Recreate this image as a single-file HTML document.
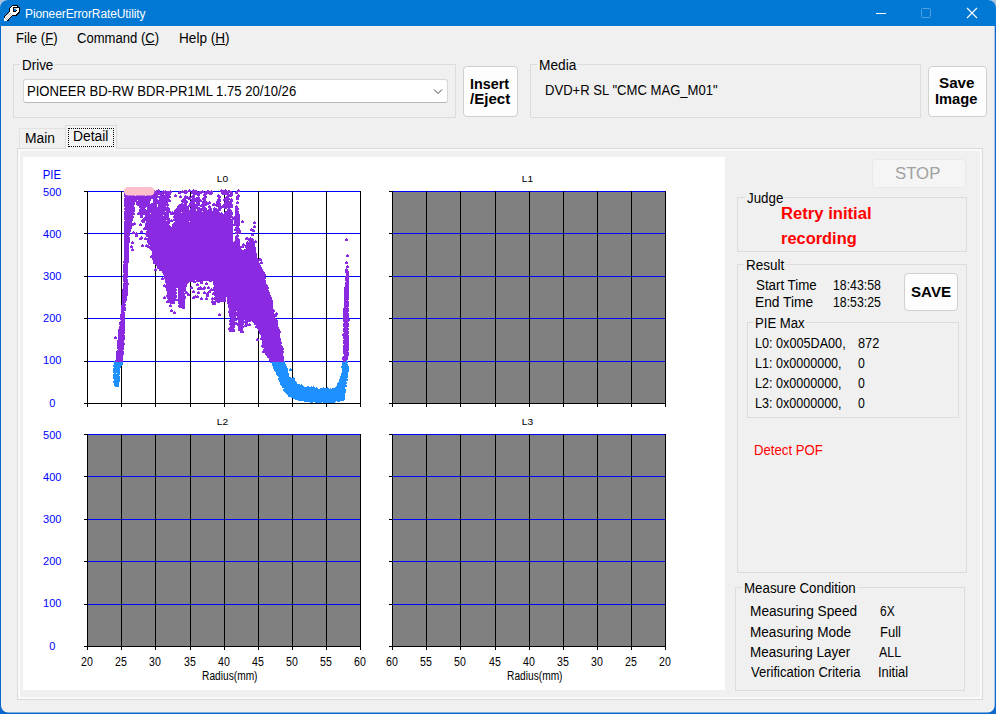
<!DOCTYPE html>
<html>
<head>
<meta charset="utf-8">
<title>PioneerErrorRateUtility</title>
<style>
html,body{margin:0;padding:0;}
body{width:996px;height:714px;overflow:hidden;background:#a9c3dd;font-family:"Liberation Sans",sans-serif;font-size:13px;color:#000;position:relative;}
#win{position:absolute;left:0;top:0;width:996px;height:714px;box-sizing:border-box;background:#f0f0f0;border-radius:8px 8px 0 0;overflow:hidden;}
#frame{position:absolute;left:0;top:0;z-index:50;pointer-events:none;}
#title{position:absolute;left:0;top:0;width:996px;height:26px;background:#0078d4;color:#fff;}
#title .t{position:absolute;left:25px;top:7px;font-size:12px;letter-spacing:-0.1px;}
.abs{position:absolute;}
.menu{position:absolute;top:30px;font-size:14px;line-height:16px;white-space:nowrap;transform:scaleX(.94);transform-origin:0 50%;}
.gb{position:absolute;border:1px solid #dcdcdc;box-sizing:border-box;}
.gb>.cap{position:absolute;top:-7px;background:#f0f0f0;padding:0 1px;line-height:15px;white-space:nowrap;font-size:14px;transform:scaleX(.94);transform-origin:0 50%;}
.btn{position:absolute;box-sizing:border-box;background:#fdfdfd;border:1px solid #d0d0d0;border-radius:4px;font-weight:bold;text-align:center;}
.l{position:absolute;white-space:nowrap;transform-origin:0 50%;}
u{text-decoration:underline;}
</style>
</head>
<body>
<div id="win">
  <div id="title">
    <svg class="abs" style="left:4px;top:5px" width="16" height="16" viewBox="0 0 16 16" shape-rendering="crispEdges"><path d="M8 0h6v1h-6zM7 1h1v1h-1zM13 1h1v1h-1zM6 2h1v1h-1zM9 2h7v1h-7zM5 3h1v1h-1zM9 3h1v1h-1zM15 3h1v1h-1zM5 4h1v1h-1zM9 4h1v1h-1zM15 4h1v1h-1zM5 5h1v1h-1zM9 5h1v1h-1zM12 5h1v1h-1zM15 5h1v1h-1zM5 6h1v1h-1zM9 6h3v1h-3zM15 6h1v1h-1zM4 7h1v1h-1zM14 7h2v1h-2zM3 8h1v1h-1zM13 8h2v1h-2zM2 9h1v1h-1zM12 9h2v1h-2zM1 10h1v1h-1zM8 10h5v1h-5zM0 11h1v1h-1zM7 11h1v1h-1zM0 12h1v1h-1zM6 12h1v1h-1zM5 13h1v1h-1zM4 14h1v1h-1zM3 15h2v1h-2z" fill="#000"/><path d="M8 1h5v1h-5zM7 2h2v1h-2zM6 3h3v1h-3zM13 3h2v1h-2zM6 4h3v1h-3zM12 4h3v1h-3zM6 5h3v1h-3zM13 5h2v1h-2zM6 6h3v1h-3zM12 6h3v1h-3zM5 7h9v1h-9zM5 8h1v1h-1zM7 8h6v1h-6zM4 9h1v1h-1zM6 9h1v1h-1zM8 9h4v1h-4zM3 10h1v1h-1zM5 10h1v1h-1zM7 10h1v1h-1zM2 11h1v1h-1zM4 11h1v1h-1zM6 11h1v1h-1zM1 12h1v1h-1zM3 12h1v1h-1zM5 12h1v1h-1zM0 13h1v1h-1zM2 13h1v1h-1zM4 13h1v1h-1zM0 14h2v1h-2zM3 14h1v1h-1zM0 15h3v1h-3z" fill="#fff"/><path d="M10 3h3v1h-3zM4 8h1v1h-1zM6 8h1v1h-1zM3 9h1v1h-1zM5 9h1v1h-1zM7 9h1v1h-1zM2 10h1v1h-1zM4 10h1v1h-1zM6 10h1v1h-1zM1 11h1v1h-1zM3 11h1v1h-1zM5 11h1v1h-1zM2 12h1v1h-1zM4 12h1v1h-1zM1 13h1v1h-1zM3 13h1v1h-1zM2 14h1v1h-1z" fill="#c8c8c8"/></svg>
    <div class="t">PioneerErrorRateUtility</div>
    <svg class="abs" style="left:860px;top:0" width="136" height="26" viewBox="0 0 136 26">
      <path d="M16 13.5 H26" stroke="#fff" stroke-width="1"/>
      <rect x="61.500" y="8.500" width="9" height="9" fill="none" stroke="#4f9fe0" stroke-width="1" rx="1"/>
      <path d="M107 8 L117 18 M117 8 L107 18" stroke="#fff" stroke-width="1.100"/>
    </svg>
  </div>



  <!-- Drive group -->
  <div class="gb" style="left:13px;top:64px;width:443px;height:54px;font-size:14px;"></div>
  <div class="abs" style="left:23px;top:79px;width:425px;height:24px;box-sizing:border-box;background:#fff;border:1px solid #d6d6d6;border-bottom-color:#b8b8b8;border-radius:3px;">
    
    <svg class="abs" style="left:409px;top:8px" width="10" height="7" viewBox="0 0 10 7"><path d="M1 1.500 L5 5.500 L9 1.500" fill="none" stroke="#444" stroke-width="1"/></svg>
  </div>
  <div class="btn" style="left:463px;top:66px;width:55px;height:51px;font-size:14px;line-height:16px;">
  </div>

  <!-- Media group -->
  <div class="gb" style="left:530px;top:64px;width:391px;height:54px;font-size:14px;">
    
  </div>
  <div class="btn" style="left:928px;top:66px;width:59px;height:51px;font-size:14px;line-height:16px;">
  </div>

  <!-- Tabs -->
  <div class="abs" style="left:17px;top:148px;width:966px;height:552px;box-sizing:border-box;border:1px solid #dadada;background:#f0f0f0;box-shadow:inset 0 0 0 2px #f9f9f9;"></div>
  
  <div class="abs" style="left:19px;top:128px;width:47px;height:20px;box-sizing:border-box;border:1px solid #e2e2e2;border-bottom:none;"></div>
  <div class="abs" style="left:65px;top:125px;width:52px;height:24px;box-sizing:border-box;border:1px solid #dadada;border-bottom:none;background:#f4f4f4;"></div>
  <div class="abs" style="left:68px;top:128px;width:46px;height:19px;box-sizing:border-box;border:1px dotted #000;"></div>
  

  <!-- Chart panel -->
  <div class="abs" id="chart" style="left:23px;top:157px;width:702px;height:533px;background:#fff;">
  <svg width="702" height="533" viewBox="23 157 702 533" style="position:absolute;left:0;top:0;font-family:'Liberation Sans',sans-serif;" shape-rendering="crispEdges">
    <rect x="87" y="191" width="273" height="1" fill="#0000ff"/>
<rect x="87" y="233" width="273" height="1" fill="#0000ff"/>
<rect x="87" y="276" width="273" height="1" fill="#0000ff"/>
<rect x="87" y="318" width="273" height="1" fill="#0000ff"/>
<rect x="87" y="361" width="273" height="1" fill="#0000ff"/>
<rect x="87" y="191" width="1" height="216" fill="#000"/>
<rect x="121" y="191" width="1" height="216" fill="#000"/>
<rect x="155" y="191" width="1" height="216" fill="#000"/>
<rect x="190" y="191" width="1" height="216" fill="#000"/>
<rect x="224" y="191" width="1" height="216" fill="#000"/>
<rect x="258" y="191" width="1" height="216" fill="#000"/>
<rect x="292" y="191" width="1" height="216" fill="#000"/>
<rect x="326" y="191" width="1" height="216" fill="#000"/>
<rect x="360" y="191" width="1" height="216" fill="#000"/>
<rect x="84" y="403" width="277" height="1" fill="#000"/>
<rect x="84" y="191" width="3" height="1" fill="#000"/>
<rect x="84" y="233" width="3" height="1" fill="#000"/>
<rect x="84" y="276" width="3" height="1" fill="#000"/>
<rect x="84" y="318" width="3" height="1" fill="#000"/>
<rect x="84" y="361" width="3" height="1" fill="#000"/>
<path d="M346 360h1v1h-1zM114 361h1v1h-1zM284 361h1v1h-1zM346 361h2v1h-2zM114 362h9v1h-9zM270 362h15v1h-15zM342 362h6v1h-6zM114 363h9v1h-9zM272 363h13v1h-13zM342 363h5v1h-5zM114 364h9v1h-9zM272 364h14v1h-14zM342 364h6v1h-6zM113 365h9v1h-9zM272 365h14v1h-14zM342 365h6v1h-6zM113 366h8v1h-8zM273 366h14v1h-14zM341 366h8v1h-8zM114 367h7v1h-7zM273 367h14v1h-14zM341 367h8v1h-8zM113 368h7v1h-7zM273 368h15v1h-15zM290 368h1v1h-1zM342 368h7v1h-7zM113 369h7v1h-7zM274 369h14v1h-14zM289 369h3v1h-3zM342 369h7v1h-7zM113 370h7v1h-7zM274 370h14v1h-14zM289 370h3v1h-3zM342 370h7v1h-7zM113 371h7v1h-7zM275 371h13v1h-13zM342 371h7v1h-7zM113 372h7v1h-7zM276 372h12v1h-12zM342 372h6v1h-6zM114 373h2v1h-2zM117 373h3v1h-3zM276 373h13v1h-13zM341 373h7v1h-7zM113 374h7v1h-7zM276 374h13v1h-13zM341 374h7v1h-7zM113 375h6v1h-6zM277 375h12v1h-12zM341 375h7v1h-7zM113 376h7v1h-7zM278 376h11v1h-11zM340 376h8v1h-8zM113 377h7v1h-7zM279 377h12v1h-12zM293 377h1v1h-1zM340 377h8v1h-8zM113 378h7v1h-7zM278 378h17v1h-17zM340 378h7v1h-7zM114 379h6v1h-6zM278 379h17v1h-17zM339 379h9v1h-9zM114 380h6v1h-6zM279 380h16v1h-16zM339 380h9v1h-9zM113 381h7v1h-7zM279 381h17v1h-17zM339 381h7v1h-7zM113 382h6v1h-6zM280 382h17v1h-17zM338 382h9v1h-9zM114 383h5v1h-5zM280 383h17v1h-17zM337 383h10v1h-10zM114 384h5v1h-5zM280 384h20v1h-20zM301 384h1v1h-1zM337 384h9v1h-9zM114 385h5v1h-5zM281 385h22v1h-22zM337 385h10v1h-10zM115 386h4v1h-4zM282 386h22v1h-22zM307 386h2v1h-2zM311 386h1v1h-1zM313 386h1v1h-1zM336 386h11v1h-11zM282 387h33v1h-33zM316 387h1v1h-1zM323 387h1v1h-1zM327 387h1v1h-1zM335 387h10v1h-10zM284 388h34v1h-34zM320 388h9v1h-9zM330 388h1v1h-1zM332 388h13v1h-13zM283 389h63v1h-63zM283 390h63v1h-63zM284 391h62v1h-62zM285 392h61v1h-61zM286 393h59v1h-59zM287 394h58v1h-58zM288 395h57v1h-57zM288 396h57v1h-57zM291 397h54v1h-54zM293 398h52v1h-52zM295 399h50v1h-50zM298 400h46v1h-46zM304 401h32v1h-32zM337 401h3v1h-3zM310 402h3v1h-3zM315 402h7v1h-7zM323 402h12v1h-12z" fill="#1e90ff"/>
<path d="M146 189h1v1h-1zM158 189h1v1h-1zM189 189h1v1h-1zM193 189h1v1h-1zM221 189h1v1h-1zM225 189h1v1h-1zM238 189h1v1h-1zM126 190h1v1h-1zM129 190h5v1h-5zM135 190h1v1h-1zM139 190h2v1h-2zM143 190h6v1h-6zM152 190h1v1h-1zM154 190h1v1h-1zM156 190h4v1h-4zM163 190h1v1h-1zM165 190h1v1h-1zM170 190h1v1h-1zM182 190h1v1h-1zM184 190h3v1h-3zM188 190h3v1h-3zM192 190h5v1h-5zM202 190h1v1h-1zM207 190h2v1h-2zM211 190h1v1h-1zM220 190h7v1h-7zM228 190h2v1h-2zM237 190h3v1h-3zM125 191h12v1h-12zM138 191h22v1h-22zM162 191h10v1h-10zM179 191h1v1h-1zM181 191h10v1h-10zM192 191h6v1h-6zM199 191h5v1h-5zM205 191h8v1h-8zM220 191h12v1h-12zM236 191h4v1h-4zM124 192h13v1h-13zM138 192h34v1h-34zM178 192h10v1h-10zM191 192h22v1h-22zM221 192h12v1h-12zM235 192h3v1h-3zM124 193h21v1h-21zM146 193h25v1h-25zM178 193h3v1h-3zM184 193h3v1h-3zM191 193h11v1h-11zM204 193h9v1h-9zM221 193h8v1h-8zM230 193h3v1h-3zM235 193h3v1h-3zM124 194h21v1h-21zM146 194h18v1h-18zM165 194h6v1h-6zM175 194h1v1h-1zM193 194h7v1h-7zM203 194h4v1h-4zM209 194h3v1h-3zM218 194h1v1h-1zM222 194h11v1h-11zM238 194h1v1h-1zM124 195h11v1h-11zM136 195h9v1h-9zM146 195h12v1h-12zM160 195h10v1h-10zM174 195h3v1h-3zM180 195h1v1h-1zM185 195h1v1h-1zM192 195h3v1h-3zM197 195h3v1h-3zM203 195h3v1h-3zM217 195h3v1h-3zM227 195h6v1h-6zM237 195h3v1h-3zM124 196h47v1h-47zM174 196h3v1h-3zM179 196h3v1h-3zM184 196h4v1h-4zM189 196h1v1h-1zM191 196h4v1h-4zM198 196h1v1h-1zM204 196h3v1h-3zM217 196h4v1h-4zM226 196h6v1h-6zM236 196h4v1h-4zM125 197h46v1h-46zM179 197h3v1h-3zM184 197h11v1h-11zM196 197h4v1h-4zM203 197h4v1h-4zM218 197h3v1h-3zM225 197h4v1h-4zM236 197h3v1h-3zM124 198h33v1h-33zM159 198h10v1h-10zM183 198h8v1h-8zM192 198h8v1h-8zM202 198h4v1h-4zM218 198h2v1h-2zM224 198h6v1h-6zM231 198h1v1h-1zM236 198h3v1h-3zM124 199h27v1h-27zM153 199h5v1h-5zM159 199h11v1h-11zM182 199h4v1h-4zM188 199h13v1h-13zM202 199h4v1h-4zM217 199h4v1h-4zM223 199h10v1h-10zM236 199h3v1h-3zM124 200h13v1h-13zM138 200h13v1h-13zM153 200h18v1h-18zM181 200h6v1h-6zM191 200h11v1h-11zM203 200h3v1h-3zM217 200h4v1h-4zM223 200h6v1h-6zM230 200h3v1h-3zM124 201h26v1h-26zM153 201h18v1h-18zM181 201h7v1h-7zM190 201h17v1h-17zM209 201h1v1h-1zM216 201h5v1h-5zM225 201h8v1h-8zM237 201h1v1h-1zM124 202h11v1h-11zM136 202h14v1h-14zM153 202h15v1h-15zM182 202h6v1h-6zM190 202h5v1h-5zM196 202h4v1h-4zM202 202h9v1h-9zM216 202h4v1h-4zM224 202h8v1h-8zM236 202h3v1h-3zM124 203h11v1h-11zM136 203h14v1h-14zM151 203h17v1h-17zM181 203h2v1h-2zM184 203h3v1h-3zM189 203h6v1h-6zM196 203h4v1h-4zM202 203h9v1h-9zM213 203h2v1h-2zM216 203h5v1h-5zM224 203h8v1h-8zM236 203h3v1h-3zM124 204h11v1h-11zM136 204h21v1h-21zM158 204h11v1h-11zM179 204h8v1h-8zM189 204h11v1h-11zM201 204h8v1h-8zM212 204h9v1h-9zM223 204h10v1h-10zM124 205h10v1h-10zM137 205h20v1h-20zM158 205h11v1h-11zM178 205h9v1h-9zM188 205h19v1h-19zM209 205h1v1h-1zM212 205h9v1h-9zM222 205h11v1h-11zM236 205h1v1h-1zM124 206h10v1h-10zM139 206h18v1h-18zM158 206h8v1h-8zM167 206h1v1h-1zM177 206h21v1h-21zM200 206h5v1h-5zM208 206h3v1h-3zM216 206h17v1h-17zM235 206h3v1h-3zM125 207h10v1h-10zM139 207h7v1h-7zM147 207h22v1h-22zM177 207h12v1h-12zM191 207h9v1h-9zM202 207h4v1h-4zM208 207h3v1h-3zM214 207h1v1h-1zM218 207h15v1h-15zM235 207h3v1h-3zM124 208h11v1h-11zM140 208h5v1h-5zM147 208h23v1h-23zM176 208h13v1h-13zM190 208h17v1h-17zM209 208h3v1h-3zM213 208h4v1h-4zM218 208h4v1h-4zM224 208h3v1h-3zM228 208h2v1h-2zM235 208h4v1h-4zM124 209h11v1h-11zM139 209h7v1h-7zM147 209h23v1h-23zM175 209h14v1h-14zM190 209h6v1h-6zM197 209h10v1h-10zM208 209h4v1h-4zM213 209h8v1h-8zM227 209h4v1h-4zM235 209h4v1h-4zM125 210h10v1h-10zM139 210h31v1h-31zM174 210h22v1h-22zM197 210h15v1h-15zM213 210h8v1h-8zM227 210h5v1h-5zM235 210h3v1h-3zM124 211h11v1h-11zM139 211h26v1h-26zM166 211h5v1h-5zM172 211h1v1h-1zM174 211h28v1h-28zM203 211h16v1h-16zM225 211h7v1h-7zM235 211h4v1h-4zM124 212h10v1h-10zM138 212h43v1h-43zM182 212h38v1h-38zM221 212h1v1h-1zM224 212h9v1h-9zM235 212h4v1h-4zM124 213h11v1h-11zM137 213h13v1h-13zM151 213h18v1h-18zM170 213h53v1h-53zM224 213h9v1h-9zM235 213h4v1h-4zM124 214h11v1h-11zM137 214h32v1h-32zM170 214h63v1h-63zM235 214h5v1h-5zM124 215h9v1h-9zM140 215h3v1h-3zM145 215h18v1h-18zM164 215h5v1h-5zM174 215h58v1h-58zM235 215h5v1h-5zM124 216h10v1h-10zM140 216h3v1h-3zM145 216h24v1h-24zM173 216h60v1h-60zM234 216h6v1h-6zM124 217h10v1h-10zM140 217h3v1h-3zM144 217h25v1h-25zM173 217h67v1h-67zM124 218h9v1h-9zM143 218h27v1h-27zM174 218h57v1h-57zM232 218h8v1h-8zM124 219h9v1h-9zM142 219h28v1h-28zM171 219h1v1h-1zM173 219h67v1h-67zM125 220h8v1h-8zM141 220h25v1h-25zM167 220h66v1h-66zM234 220h6v1h-6zM242 220h1v1h-1zM124 221h8v1h-8zM141 221h4v1h-4zM146 221h27v1h-27zM175 221h14v1h-14zM190 221h43v1h-43zM234 221h6v1h-6zM241 221h3v1h-3zM254 221h1v1h-1zM124 222h8v1h-8zM134 222h1v1h-1zM142 222h3v1h-3zM146 222h24v1h-24zM174 222h59v1h-59zM234 222h6v1h-6zM241 222h3v1h-3zM253 222h3v1h-3zM124 223h12v1h-12zM140 223h1v1h-1zM145 223h25v1h-25zM173 223h60v1h-60zM234 223h6v1h-6zM253 223h3v1h-3zM124 224h12v1h-12zM139 224h3v1h-3zM145 224h24v1h-24zM172 224h68v1h-68zM124 225h10v1h-10zM139 225h3v1h-3zM145 225h25v1h-25zM172 225h68v1h-68zM254 225h1v1h-1zM124 226h8v1h-8zM145 226h26v1h-26zM172 226h61v1h-61zM236 226h3v1h-3zM253 226h3v1h-3zM124 227h8v1h-8zM144 227h89v1h-89zM235 227h4v1h-4zM253 227h3v1h-3zM124 228h8v1h-8zM143 228h90v1h-90zM235 228h5v1h-5zM251 228h1v1h-1zM124 229h7v1h-7zM143 229h90v1h-90zM234 229h6v1h-6zM250 229h4v1h-4zM124 230h7v1h-7zM141 230h1v1h-1zM147 230h86v1h-86zM234 230h7v1h-7zM250 230h5v1h-5zM124 231h7v1h-7zM133 231h1v1h-1zM140 231h3v1h-3zM146 231h87v1h-87zM236 231h5v1h-5zM252 231h3v1h-3zM124 232h6v1h-6zM132 232h3v1h-3zM136 232h1v1h-1zM140 232h3v1h-3zM146 232h87v1h-87zM235 232h6v1h-6zM124 233h6v1h-6zM132 233h6v1h-6zM145 233h88v1h-88zM235 233h6v1h-6zM252 233h1v1h-1zM124 234h6v1h-6zM135 234h3v1h-3zM145 234h88v1h-88zM237 234h1v1h-1zM251 234h3v1h-3zM124 235h6v1h-6zM135 235h3v1h-3zM146 235h87v1h-87zM236 235h3v1h-3zM251 235h3v1h-3zM124 236h5v1h-5zM135 236h3v1h-3zM141 236h1v1h-1zM146 236h87v1h-87zM235 236h4v1h-4zM124 237h6v1h-6zM140 237h3v1h-3zM145 237h1v1h-1zM148 237h85v1h-85zM235 237h3v1h-3zM246 237h2v1h-2zM250 237h1v1h-1zM124 238h6v1h-6zM139 238h4v1h-4zM144 238h89v1h-89zM235 238h4v1h-4zM245 238h8v1h-8zM346 238h1v1h-1zM124 239h6v1h-6zM139 239h3v1h-3zM144 239h89v1h-89zM235 239h5v1h-5zM245 239h9v1h-9zM345 239h3v1h-3zM124 240h6v1h-6zM147 240h86v1h-86zM235 240h5v1h-5zM248 240h6v1h-6zM255 240h1v1h-1zM345 240h3v1h-3zM124 241h6v1h-6zM132 241h1v1h-1zM147 241h86v1h-86zM234 241h6v1h-6zM247 241h1v1h-1zM249 241h8v1h-8zM124 242h6v1h-6zM131 242h3v1h-3zM147 242h93v1h-93zM246 242h11v1h-11zM124 243h5v1h-5zM131 243h3v1h-3zM148 243h92v1h-92zM243 243h1v1h-1zM246 243h9v1h-9zM124 244h5v1h-5zM142 244h1v1h-1zM146 244h1v1h-1zM148 244h92v1h-92zM242 244h3v1h-3zM246 244h9v1h-9zM124 245h5v1h-5zM131 245h1v1h-1zM141 245h3v1h-3zM145 245h4v1h-4zM150 245h90v1h-90zM242 245h13v1h-13zM124 246h5v1h-5zM130 246h3v1h-3zM141 246h3v1h-3zM145 246h99v1h-99zM245 246h10v1h-10zM124 247h5v1h-5zM130 247h3v1h-3zM147 247h97v1h-97zM245 247h11v1h-11zM124 248h5v1h-5zM132 248h1v1h-1zM149 248h92v1h-92zM246 248h10v1h-10zM124 249h5v1h-5zM131 249h3v1h-3zM150 249h92v1h-92zM244 249h12v1h-12zM124 250h5v1h-5zM131 250h3v1h-3zM151 250h105v1h-105zM124 251h5v1h-5zM152 251h104v1h-104zM124 252h5v1h-5zM152 252h104v1h-104zM124 253h5v1h-5zM152 253h105v1h-105zM124 254h5v1h-5zM152 254h105v1h-105zM347 254h1v1h-1zM124 255h5v1h-5zM151 255h106v1h-106zM346 255h3v1h-3zM124 256h5v1h-5zM150 256h107v1h-107zM346 256h3v1h-3zM124 257h5v1h-5zM150 257h107v1h-107zM124 258h5v1h-5zM152 258h106v1h-106zM259 258h2v1h-2zM124 259h5v1h-5zM152 259h110v1h-110zM124 260h5v1h-5zM153 260h109v1h-109zM123 261h6v1h-6zM153 261h106v1h-106zM261 261h1v1h-1zM346 261h1v1h-1zM123 262h6v1h-6zM153 262h106v1h-106zM260 262h3v1h-3zM345 262h3v1h-3zM124 263h4v1h-4zM153 263h110v1h-110zM345 263h3v1h-3zM123 264h5v1h-5zM155 264h105v1h-105zM123 265h5v1h-5zM156 265h105v1h-105zM347 265h1v1h-1zM123 266h5v1h-5zM157 266h104v1h-104zM346 266h3v1h-3zM123 267h5v1h-5zM157 267h105v1h-105zM346 267h3v1h-3zM123 268h5v1h-5zM155 268h1v1h-1zM157 268h105v1h-105zM346 268h1v1h-1zM123 269h5v1h-5zM154 269h3v1h-3zM159 269h104v1h-104zM345 269h3v1h-3zM123 270h5v1h-5zM154 270h3v1h-3zM159 270h104v1h-104zM345 270h3v1h-3zM123 271h5v1h-5zM162 271h102v1h-102zM345 271h4v1h-4zM123 272h5v1h-5zM162 272h103v1h-103zM345 272h4v1h-4zM124 273h4v1h-4zM163 273h102v1h-102zM346 273h3v1h-3zM123 274h5v1h-5zM163 274h103v1h-103zM346 274h3v1h-3zM123 275h5v1h-5zM164 275h102v1h-102zM346 275h3v1h-3zM123 276h5v1h-5zM164 276h101v1h-101zM345 276h4v1h-4zM123 277h5v1h-5zM162 277h1v1h-1zM164 277h102v1h-102zM345 277h4v1h-4zM123 278h4v1h-4zM161 278h105v1h-105zM345 278h4v1h-4zM123 279h5v1h-5zM161 279h3v1h-3zM165 279h100v1h-100zM345 279h4v1h-4zM123 280h5v1h-5zM165 280h30v1h-30zM196 280h70v1h-70zM345 280h4v1h-4zM123 281h5v1h-5zM165 281h38v1h-38zM209 281h3v1h-3zM213 281h53v1h-53zM346 281h3v1h-3zM124 282h4v1h-4zM165 282h24v1h-24zM193 282h3v1h-3zM200 282h3v1h-3zM206 282h1v1h-1zM213 282h53v1h-53zM345 282h4v1h-4zM123 283h6v1h-6zM166 283h22v1h-22zM197 283h1v1h-1zM200 283h3v1h-3zM205 283h3v1h-3zM213 283h53v1h-53zM345 283h4v1h-4zM123 284h6v1h-6zM164 284h1v1h-1zM166 284h21v1h-21zM196 284h3v1h-3zM205 284h3v1h-3zM213 284h54v1h-54zM345 284h4v1h-4zM123 285h5v1h-5zM163 285h24v1h-24zM196 285h3v1h-3zM214 285h54v1h-54zM345 285h4v1h-4zM123 286h5v1h-5zM163 286h24v1h-24zM191 286h1v1h-1zM200 286h1v1h-1zM204 286h1v1h-1zM208 286h1v1h-1zM214 286h54v1h-54zM345 286h4v1h-4zM123 287h5v1h-5zM165 287h21v1h-21zM190 287h3v1h-3zM198 287h4v1h-4zM203 287h3v1h-3zM207 287h3v1h-3zM213 287h56v1h-56zM344 287h5v1h-5zM123 288h5v1h-5zM166 288h10v1h-10zM178 288h8v1h-8zM190 288h3v1h-3zM197 288h9v1h-9zM207 288h3v1h-3zM211 288h1v1h-1zM213 288h56v1h-56zM344 288h5v1h-5zM122 289h6v1h-6zM166 289h11v1h-11zM178 289h8v1h-8zM197 289h8v1h-8zM210 289h58v1h-58zM344 289h5v1h-5zM122 290h6v1h-6zM166 290h11v1h-11zM178 290h8v1h-8zM193 290h1v1h-1zM209 290h60v1h-60zM344 290h5v1h-5zM122 291h6v1h-6zM167 291h9v1h-9zM178 291h9v1h-9zM192 291h3v1h-3zM198 291h1v1h-1zM204 291h1v1h-1zM208 291h3v1h-3zM214 291h55v1h-55zM344 291h5v1h-5zM122 292h6v1h-6zM167 292h10v1h-10zM178 292h6v1h-6zM185 292h3v1h-3zM192 292h3v1h-3zM197 292h3v1h-3zM203 292h3v1h-3zM207 292h4v1h-4zM213 292h57v1h-57zM344 292h5v1h-5zM122 293h6v1h-6zM167 293h10v1h-10zM178 293h11v1h-11zM197 293h3v1h-3zM203 293h6v1h-6zM212 293h58v1h-58zM344 293h5v1h-5zM122 294h6v1h-6zM167 294h9v1h-9zM178 294h7v1h-7zM187 294h3v1h-3zM206 294h3v1h-3zM212 294h58v1h-58zM344 294h5v1h-5zM122 295h6v1h-6zM166 295h11v1h-11zM178 295h7v1h-7zM187 295h3v1h-3zM195 295h1v1h-1zM197 295h1v1h-1zM206 295h3v1h-3zM214 295h57v1h-57zM344 295h5v1h-5zM122 296h5v1h-5zM164 296h1v1h-1zM166 296h11v1h-11zM178 296h8v1h-8zM193 296h6v1h-6zM206 296h3v1h-3zM215 296h56v1h-56zM344 296h5v1h-5zM122 297h5v1h-5zM163 297h3v1h-3zM167 297h10v1h-10zM178 297h8v1h-8zM192 297h7v1h-7zM201 297h1v1h-1zM206 297h1v1h-1zM212 297h1v1h-1zM214 297h12v1h-12zM227 297h45v1h-45zM344 297h5v1h-5zM122 298h5v1h-5zM163 298h3v1h-3zM167 298h9v1h-9zM178 298h8v1h-8zM192 298h3v1h-3zM200 298h3v1h-3zM205 298h3v1h-3zM211 298h15v1h-15zM227 298h45v1h-45zM344 298h5v1h-5zM122 299h5v1h-5zM168 299h17v1h-17zM200 299h3v1h-3zM205 299h3v1h-3zM211 299h15v1h-15zM227 299h45v1h-45zM344 299h5v1h-5zM122 300h5v1h-5zM167 300h18v1h-18zM212 300h1v1h-1zM215 300h11v1h-11zM227 300h46v1h-46zM344 300h4v1h-4zM122 301h4v1h-4zM166 301h9v1h-9zM178 301h7v1h-7zM211 301h15v1h-15zM227 301h46v1h-46zM344 301h5v1h-5zM122 302h4v1h-4zM166 302h9v1h-9zM178 302h7v1h-7zM211 302h5v1h-5zM217 302h3v1h-3zM227 302h46v1h-46zM344 302h5v1h-5zM122 303h3v1h-3zM170 303h5v1h-5zM178 303h7v1h-7zM212 303h4v1h-4zM227 303h46v1h-46zM344 303h5v1h-5zM122 304h4v1h-4zM170 304h1v1h-1zM179 304h6v1h-6zM212 304h4v1h-4zM228 304h45v1h-45zM344 304h5v1h-5zM121 305h5v1h-5zM169 305h3v1h-3zM178 305h7v1h-7zM228 305h45v1h-45zM344 305h5v1h-5zM121 306h4v1h-4zM169 306h3v1h-3zM178 306h7v1h-7zM228 306h45v1h-45zM344 306h5v1h-5zM121 307h5v1h-5zM179 307h6v1h-6zM228 307h45v1h-45zM344 307h4v1h-4zM121 308h5v1h-5zM182 308h3v1h-3zM229 308h44v1h-44zM343 308h6v1h-6zM121 309h5v1h-5zM171 309h1v1h-1zM229 309h45v1h-45zM343 309h6v1h-6zM121 310h5v1h-5zM170 310h3v1h-3zM229 310h46v1h-46zM343 310h6v1h-6zM121 311h3v1h-3zM170 311h3v1h-3zM174 311h1v1h-1zM228 311h8v1h-8zM237 311h38v1h-38zM343 311h6v1h-6zM121 312h4v1h-4zM173 312h3v1h-3zM228 312h46v1h-46zM276 312h1v1h-1zM343 312h5v1h-5zM121 313h4v1h-4zM173 313h3v1h-3zM219 313h1v1h-1zM229 313h45v1h-45zM275 313h3v1h-3zM343 313h6v1h-6zM120 314h5v1h-5zM218 314h3v1h-3zM229 314h49v1h-49zM343 314h6v1h-6zM120 315h5v1h-5zM218 315h3v1h-3zM229 315h48v1h-48zM343 315h6v1h-6zM120 316h5v1h-5zM229 316h7v1h-7zM237 316h40v1h-40zM343 316h6v1h-6zM120 317h5v1h-5zM230 317h6v1h-6zM237 317h38v1h-38zM343 317h6v1h-6zM120 318h5v1h-5zM231 318h5v1h-5zM237 318h39v1h-39zM343 318h6v1h-6zM120 319h5v1h-5zM230 319h47v1h-47zM343 319h7v1h-7zM121 320h4v1h-4zM229 320h8v1h-8zM238 320h6v1h-6zM245 320h33v1h-33zM343 320h7v1h-7zM120 321h5v1h-5zM229 321h6v1h-6zM238 321h13v1h-13zM252 321h26v1h-26zM343 321h6v1h-6zM119 322h6v1h-6zM230 322h7v1h-7zM238 322h10v1h-10zM253 322h25v1h-25zM344 322h4v1h-4zM119 323h6v1h-6zM229 323h15v1h-15zM245 323h3v1h-3zM249 323h1v1h-1zM254 323h24v1h-24zM343 323h6v1h-6zM119 324h6v1h-6zM229 324h15v1h-15zM245 324h6v1h-6zM254 324h24v1h-24zM343 324h6v1h-6zM120 325h5v1h-5zM230 325h5v1h-5zM237 325h6v1h-6zM244 325h7v1h-7zM256 325h22v1h-22zM343 325h6v1h-6zM119 326h6v1h-6zM230 326h5v1h-5zM238 326h9v1h-9zM255 326h23v1h-23zM343 326h6v1h-6zM119 327h6v1h-6zM229 327h6v1h-6zM238 327h6v1h-6zM255 327h24v1h-24zM344 327h4v1h-4zM119 328h6v1h-6zM228 328h6v1h-6zM238 328h5v1h-5zM257 328h22v1h-22zM343 328h6v1h-6zM118 329h7v1h-7zM228 329h7v1h-7zM238 329h5v1h-5zM258 329h22v1h-22zM343 329h6v1h-6zM118 330h7v1h-7zM229 330h6v1h-6zM238 330h5v1h-5zM258 330h22v1h-22zM343 330h5v1h-5zM118 331h7v1h-7zM229 331h6v1h-6zM240 331h4v1h-4zM259 331h22v1h-22zM343 331h6v1h-6zM118 332h7v1h-7zM240 332h4v1h-4zM259 332h22v1h-22zM344 332h5v1h-5zM118 333h7v1h-7zM259 333h21v1h-21zM343 333h6v1h-6zM118 334h6v1h-6zM260 334h20v1h-20zM342 334h6v1h-6zM118 335h7v1h-7zM261 335h19v1h-19zM342 335h7v1h-7zM115 336h1v1h-1zM118 336h7v1h-7zM261 336h19v1h-19zM343 336h6v1h-6zM114 337h3v1h-3zM118 337h7v1h-7zM261 337h19v1h-19zM343 337h6v1h-6zM114 338h3v1h-3zM118 338h7v1h-7zM257 338h1v1h-1zM260 338h21v1h-21zM343 338h6v1h-6zM118 339h7v1h-7zM256 339h3v1h-3zM260 339h21v1h-21zM344 339h5v1h-5zM117 340h7v1h-7zM256 340h3v1h-3zM262 340h19v1h-19zM343 340h6v1h-6zM117 341h7v1h-7zM262 341h19v1h-19zM343 341h6v1h-6zM117 342h7v1h-7zM262 342h20v1h-20zM343 342h6v1h-6zM117 343h8v1h-8zM262 343h20v1h-20zM343 343h6v1h-6zM117 344h8v1h-8zM262 344h19v1h-19zM344 344h5v1h-5zM117 345h7v1h-7zM261 345h21v1h-21zM343 345h6v1h-6zM117 346h7v1h-7zM261 346h22v1h-22zM343 346h6v1h-6zM117 347h7v1h-7zM262 347h21v1h-21zM343 347h6v1h-6zM117 348h7v1h-7zM264 348h20v1h-20zM343 348h6v1h-6zM118 349h6v1h-6zM263 349h21v1h-21zM343 349h6v1h-6zM117 350h6v1h-6zM263 350h20v1h-20zM343 350h6v1h-6zM116 351h8v1h-8zM262 351h22v1h-22zM343 351h5v1h-5zM116 352h8v1h-8zM262 352h22v1h-22zM343 352h6v1h-6zM116 353h8v1h-8zM265 353h18v1h-18zM343 353h6v1h-6zM116 354h8v1h-8zM265 354h18v1h-18zM344 354h5v1h-5zM116 355h7v1h-7zM266 355h17v1h-17zM344 355h5v1h-5zM116 356h7v1h-7zM267 356h17v1h-17zM343 356h5v1h-5zM116 357h7v1h-7zM267 357h17v1h-17zM342 357h6v1h-6zM116 358h7v1h-7zM269 358h15v1h-15zM342 358h6v1h-6zM116 359h7v1h-7zM269 359h15v1h-15zM342 359h6v1h-6zM115 360h8v1h-8zM269 360h15v1h-15zM343 360h3v1h-3zM115 361h8v1h-8zM270 361h14v1h-14zM343 361h3v1h-3z" fill="#8a2be2"/>
<rect x="124" y="187" width="30.5" height="8.5" rx="4.200" ry="4.200" fill="#ffc0cb" shape-rendering="auto"/>
<text x="216.8" y="182" font-size="9.600" textLength="11.300" lengthAdjust="spacingAndGlyphs" fill="#000">L0</text>
<text x="52.2" y="196.3" font-size="11" text-anchor="middle" fill="#0000ff">500</text>
<text x="52.2" y="238.3" font-size="11" text-anchor="middle" fill="#0000ff">400</text>
<text x="52.2" y="280.4" font-size="11" text-anchor="middle" fill="#0000ff">300</text>
<text x="52.2" y="322.4" font-size="11" text-anchor="middle" fill="#0000ff">200</text>
<text x="52.2" y="364.4" font-size="11" text-anchor="middle" fill="#0000ff">100</text>
<text x="52.2" y="406.5" font-size="11" text-anchor="middle" fill="#0000ff">0</text>
<rect x="392" y="191" width="273" height="212" fill="#808080"/>
<rect x="392" y="191" width="273" height="1" fill="#0000ff"/>
<rect x="392" y="233" width="273" height="1" fill="#0000ff"/>
<rect x="392" y="276" width="273" height="1" fill="#0000ff"/>
<rect x="392" y="318" width="273" height="1" fill="#0000ff"/>
<rect x="392" y="361" width="273" height="1" fill="#0000ff"/>
<rect x="392" y="191" width="1" height="216" fill="#000"/>
<rect x="426" y="191" width="1" height="216" fill="#000"/>
<rect x="460" y="191" width="1" height="216" fill="#000"/>
<rect x="495" y="191" width="1" height="216" fill="#000"/>
<rect x="529" y="191" width="1" height="216" fill="#000"/>
<rect x="563" y="191" width="1" height="216" fill="#000"/>
<rect x="597" y="191" width="1" height="216" fill="#000"/>
<rect x="631" y="191" width="1" height="216" fill="#000"/>
<rect x="665" y="191" width="1" height="216" fill="#000"/>
<rect x="389" y="403" width="277" height="1" fill="#000"/>
<rect x="389" y="191" width="3" height="1" fill="#000"/>
<rect x="389" y="233" width="3" height="1" fill="#000"/>
<rect x="389" y="276" width="3" height="1" fill="#000"/>
<rect x="389" y="318" width="3" height="1" fill="#000"/>
<rect x="389" y="361" width="3" height="1" fill="#000"/>
<text x="521.8" y="182" font-size="9.600" textLength="11.300" lengthAdjust="spacingAndGlyphs" fill="#000">L1</text>
<rect x="87" y="434" width="273" height="212" fill="#808080"/>
<rect x="87" y="434" width="273" height="1" fill="#0000ff"/>
<rect x="87" y="476" width="273" height="1" fill="#0000ff"/>
<rect x="87" y="519" width="273" height="1" fill="#0000ff"/>
<rect x="87" y="561" width="273" height="1" fill="#0000ff"/>
<rect x="87" y="604" width="273" height="1" fill="#0000ff"/>
<rect x="87" y="434" width="1" height="216" fill="#000"/>
<rect x="121" y="434" width="1" height="216" fill="#000"/>
<rect x="155" y="434" width="1" height="216" fill="#000"/>
<rect x="190" y="434" width="1" height="216" fill="#000"/>
<rect x="224" y="434" width="1" height="216" fill="#000"/>
<rect x="258" y="434" width="1" height="216" fill="#000"/>
<rect x="292" y="434" width="1" height="216" fill="#000"/>
<rect x="326" y="434" width="1" height="216" fill="#000"/>
<rect x="360" y="434" width="1" height="216" fill="#000"/>
<rect x="84" y="646" width="277" height="1" fill="#000"/>
<rect x="84" y="434" width="3" height="1" fill="#000"/>
<rect x="84" y="476" width="3" height="1" fill="#000"/>
<rect x="84" y="519" width="3" height="1" fill="#000"/>
<rect x="84" y="561" width="3" height="1" fill="#000"/>
<rect x="84" y="604" width="3" height="1" fill="#000"/>
<text x="216.8" y="425" font-size="9.600" textLength="11.300" lengthAdjust="spacingAndGlyphs" fill="#000">L2</text>
<text x="52.2" y="439.3" font-size="11" text-anchor="middle" fill="#0000ff">500</text>
<text x="52.2" y="481.3" font-size="11" text-anchor="middle" fill="#0000ff">400</text>
<text x="52.2" y="523.4" font-size="11" text-anchor="middle" fill="#0000ff">300</text>
<text x="52.2" y="565.4" font-size="11" text-anchor="middle" fill="#0000ff">200</text>
<text x="52.2" y="607.4" font-size="11" text-anchor="middle" fill="#0000ff">100</text>
<text x="52.2" y="649.5" font-size="11" text-anchor="middle" fill="#0000ff">0</text>
<text x="81.1" y="665.6" font-size="12" textLength="11.800" lengthAdjust="spacingAndGlyphs" fill="#000">20</text>
<text x="115.1" y="665.6" font-size="12" textLength="11.800" lengthAdjust="spacingAndGlyphs" fill="#000">25</text>
<text x="149.1" y="665.6" font-size="12" textLength="11.800" lengthAdjust="spacingAndGlyphs" fill="#000">30</text>
<text x="184.1" y="665.6" font-size="12" textLength="11.800" lengthAdjust="spacingAndGlyphs" fill="#000">35</text>
<text x="218.1" y="665.6" font-size="12" textLength="11.800" lengthAdjust="spacingAndGlyphs" fill="#000">40</text>
<text x="252.1" y="665.6" font-size="12" textLength="11.800" lengthAdjust="spacingAndGlyphs" fill="#000">45</text>
<text x="286.1" y="665.6" font-size="12" textLength="11.800" lengthAdjust="spacingAndGlyphs" fill="#000">50</text>
<text x="320.1" y="665.6" font-size="12" textLength="11.800" lengthAdjust="spacingAndGlyphs" fill="#000">55</text>
<text x="354.1" y="665.6" font-size="12" textLength="11.800" lengthAdjust="spacingAndGlyphs" fill="#000">60</text>
<text x="202.1" y="680" font-size="12" textLength="55.400" lengthAdjust="spacingAndGlyphs" fill="#000">Radius(mm)</text>
<rect x="392" y="434" width="273" height="212" fill="#808080"/>
<rect x="392" y="434" width="273" height="1" fill="#0000ff"/>
<rect x="392" y="476" width="273" height="1" fill="#0000ff"/>
<rect x="392" y="519" width="273" height="1" fill="#0000ff"/>
<rect x="392" y="561" width="273" height="1" fill="#0000ff"/>
<rect x="392" y="604" width="273" height="1" fill="#0000ff"/>
<rect x="392" y="434" width="1" height="216" fill="#000"/>
<rect x="426" y="434" width="1" height="216" fill="#000"/>
<rect x="460" y="434" width="1" height="216" fill="#000"/>
<rect x="495" y="434" width="1" height="216" fill="#000"/>
<rect x="529" y="434" width="1" height="216" fill="#000"/>
<rect x="563" y="434" width="1" height="216" fill="#000"/>
<rect x="597" y="434" width="1" height="216" fill="#000"/>
<rect x="631" y="434" width="1" height="216" fill="#000"/>
<rect x="665" y="434" width="1" height="216" fill="#000"/>
<rect x="389" y="646" width="277" height="1" fill="#000"/>
<rect x="389" y="434" width="3" height="1" fill="#000"/>
<rect x="389" y="476" width="3" height="1" fill="#000"/>
<rect x="389" y="519" width="3" height="1" fill="#000"/>
<rect x="389" y="561" width="3" height="1" fill="#000"/>
<rect x="389" y="604" width="3" height="1" fill="#000"/>
<text x="521.8" y="425" font-size="9.600" textLength="11.300" lengthAdjust="spacingAndGlyphs" fill="#000">L3</text>
<text x="386.1" y="665.6" font-size="12" textLength="11.800" lengthAdjust="spacingAndGlyphs" fill="#000">60</text>
<text x="420.1" y="665.6" font-size="12" textLength="11.800" lengthAdjust="spacingAndGlyphs" fill="#000">55</text>
<text x="454.1" y="665.6" font-size="12" textLength="11.800" lengthAdjust="spacingAndGlyphs" fill="#000">50</text>
<text x="489.1" y="665.6" font-size="12" textLength="11.800" lengthAdjust="spacingAndGlyphs" fill="#000">45</text>
<text x="523.1" y="665.6" font-size="12" textLength="11.800" lengthAdjust="spacingAndGlyphs" fill="#000">40</text>
<text x="557.1" y="665.6" font-size="12" textLength="11.800" lengthAdjust="spacingAndGlyphs" fill="#000">35</text>
<text x="591.1" y="665.6" font-size="12" textLength="11.800" lengthAdjust="spacingAndGlyphs" fill="#000">30</text>
<text x="625.1" y="665.6" font-size="12" textLength="11.800" lengthAdjust="spacingAndGlyphs" fill="#000">25</text>
<text x="659.1" y="665.6" font-size="12" textLength="11.800" lengthAdjust="spacingAndGlyphs" fill="#000">20</text>
<text x="507.1" y="680" font-size="12" textLength="55.400" lengthAdjust="spacingAndGlyphs" fill="#000">Radius(mm)</text>
<text x="42.7" y="179" font-size="12" textLength="18.300" lengthAdjust="spacingAndGlyphs" fill="#0000ff">PIE</text>
  </svg>
  </div>

  <!-- Right panel -->
  <div class="btn" style="left:872px;top:159px;width:94px;height:29px;background:#f5f5f5;border-color:#e9e9e9;"></div>

  <div class="gb" style="left:737px;top:197px;width:230px;height:55px;">
    
  </div>

  <div class="gb" style="left:737px;top:264px;width:230px;height:309px;"></div>
  
  
  
  
  <div class="btn" style="left:904px;top:273px;width:54px;height:38px;font-size:14px;"></div>

  <div class="gb" style="left:747px;top:322px;width:212px;height:96px;"></div>
  
  
  
  

  

  <div class="gb" style="left:735px;top:587px;width:230px;height:104px;"></div>
  
  
  
  

  <div class="l" style="left:16.15px;top:30.15px;font-size:14px;line-height:16px;transform:scaleX(0.937);">File (<u>F</u>)</div>
  <div class="l" style="left:77.32px;top:30.15px;font-size:14px;line-height:16px;transform:scaleX(0.933);">Command (<u>C</u>)</div>
  <div class="l" style="left:178.71px;top:30.15px;font-size:14px;line-height:16px;transform:scaleX(0.971);">Help (<u>H</u>)</div>
  <div class="l" style="left:22.12px;top:57.15px;font-size:14px;line-height:16px;transform:scaleX(0.958);background:#f0f0f0;box-shadow:-2px 0 0 #f0f0f0,1px 0 0 #f0f0f0;">Drive</div>
  <div class="l" style="left:26.65px;top:83.15px;font-size:14px;line-height:16px;transform:scaleX(0.935);">PIONEER BD-RW BDR-PR1ML 1.75 20/10/26</div>
  <div class="l" style="left:538.90px;top:57.15px;font-size:14px;line-height:16px;transform:scaleX(0.978);background:#f0f0f0;box-shadow:-2px 0 0 #f0f0f0,1px 0 0 #f0f0f0;">Media</div>
  <div class="l" style="left:544.75px;top:82.15px;font-size:14px;line-height:16px;transform:scaleX(0.934);">DVD+R SL "CMC MAG_M01"</div>
  <div class="l" style="left:24.59px;top:130.15px;font-size:14px;line-height:16px;transform:scaleX(0.987);">Main</div>
  <div class="l" style="left:72.99px;top:128.15px;font-size:14px;line-height:16px;transform:scaleX(0.989);">Detail</div>
  <div class="l" style="left:747.38px;top:190.15px;font-size:14px;line-height:16px;transform:scaleX(0.952);background:#f0f0f0;box-shadow:-2px 0 0 #f0f0f0,1px 0 0 #f0f0f0;">Judge</div>
  <div class="l" style="left:781.16px;top:205.46px;font-size:16px;line-height:18px;transform:scaleX(1.040);font-weight:bold;color:#ff0000;">Retry initial</div>
  <div class="l" style="left:781.17px;top:230.46px;font-size:16px;line-height:18px;transform:scaleX(1.026);font-weight:bold;color:#ff0000;">recording</div>
  <div class="l" style="left:745.82px;top:257.15px;font-size:14px;line-height:16px;transform:scaleX(0.964);background:#f0f0f0;box-shadow:-2px 0 0 #f0f0f0,1px 0 0 #f0f0f0;">Result</div>
  <div class="l" style="left:755.81px;top:277.15px;font-size:14px;line-height:16px;transform:scaleX(0.952);">Start Time</div>
  <div class="l" style="left:833.32px;top:277.15px;font-size:14px;line-height:16px;transform:scaleX(0.879);">18:43:58</div>
  <div class="l" style="left:755.29px;top:294.15px;font-size:14px;line-height:16px;transform:scaleX(0.984);">End Time</div>
  <div class="l" style="left:833.32px;top:294.15px;font-size:14px;line-height:16px;transform:scaleX(0.879);">18:53:25</div>
  <div class="l" style="left:755.34px;top:315.15px;font-size:14px;line-height:16px;transform:scaleX(0.939);background:#f0f0f0;box-shadow:-2px 0 0 #f0f0f0,1px 0 0 #f0f0f0;">PIE Max</div>
  <div class="l" style="left:755.38px;top:335.15px;font-size:14px;line-height:16px;transform:scaleX(0.903);">L0: 0x005DA00,</div>
  <div class="l" style="left:858.14px;top:335.15px;font-size:14px;line-height:16px;transform:scaleX(0.912);">872</div>
  <div class="l" style="left:755.39px;top:355.15px;font-size:14px;line-height:16px;transform:scaleX(0.897);">L1: 0x0000000,</div>
  <div class="l" style="left:858.16px;top:355.15px;font-size:14px;line-height:16px;transform:scaleX(0.874);">0</div>
  <div class="l" style="left:755.39px;top:375.15px;font-size:14px;line-height:16px;transform:scaleX(0.897);">L2: 0x0000000,</div>
  <div class="l" style="left:858.16px;top:375.15px;font-size:14px;line-height:16px;transform:scaleX(0.874);">0</div>
  <div class="l" style="left:755.39px;top:395.15px;font-size:14px;line-height:16px;transform:scaleX(0.897);">L3: 0x0000000,</div>
  <div class="l" style="left:858.16px;top:395.15px;font-size:14px;line-height:16px;transform:scaleX(0.874);">0</div>
  <div class="l" style="left:753.94px;top:442.15px;font-size:14px;line-height:16px;transform:scaleX(0.940);color:#ff0000;">Detect POF</div>
  <div class="l" style="left:744.13px;top:580.15px;font-size:14px;line-height:16px;transform:scaleX(0.951);background:#f0f0f0;box-shadow:-2px 0 0 #f0f0f0,1px 0 0 #f0f0f0;">Measure Condition</div>
  <div class="l" style="left:749.60px;top:603.15px;font-size:14px;line-height:16px;transform:scaleX(0.976);">Measuring Speed</div>
  <div class="l" style="left:880.17px;top:603.15px;font-size:14px;line-height:16px;transform:scaleX(0.855);">6X</div>
  <div class="l" style="left:749.61px;top:623.65px;font-size:14px;line-height:16px;transform:scaleX(0.970);">Measuring Mode</div>
  <div class="l" style="left:880.15px;top:623.65px;font-size:14px;line-height:16px;transform:scaleX(0.931);">Full</div>
  <div class="l" style="left:749.62px;top:643.75px;font-size:14px;line-height:16px;transform:scaleX(0.961);">Measuring Layer</div>
  <div class="l" style="left:878.70px;top:643.75px;font-size:14px;line-height:16px;transform:scaleX(0.886);">ALL</div>
  <div class="l" style="left:750.70px;top:664.15px;font-size:14px;line-height:16px;transform:scaleX(0.931);">Verification Criteria</div>
  <div class="l" style="left:878.05px;top:664.15px;font-size:14px;line-height:16px;transform:scaleX(0.921);">Initial</div>
  <div class="l" style="left:469.80px;top:75.55px;font-size:14px;line-height:16px;transform:scaleX(1.024);font-weight:bold;">Insert</div>
  <div class="l" style="left:469.87px;top:91.15px;font-size:14px;line-height:16px;transform:scaleX(1.077);font-weight:bold;">/Eject</div>
  <div class="l" style="left:938.69px;top:74.95px;font-size:14px;line-height:16px;transform:scaleX(1.085);font-weight:bold;">Save</div>
  <div class="l" style="left:935.48px;top:90.85px;font-size:14px;line-height:16px;transform:scaleX(1.048);font-weight:bold;">Image</div>
  <div class="l" style="left:910.52px;top:283.30px;font-size:15px;line-height:17px;transform:scaleX(1.008);font-weight:bold;">SAVE</div>
  <div class="l" style="left:895.34px;top:164.96px;font-size:16px;line-height:18px;transform:scaleX(1.048);color:#a0a0a0;">STOP</div>
  <svg id="frame" width="996" height="714" viewBox="0 0 996 714"><path fill-rule="evenodd" fill="#0a68cc" d="M0 26H996V714H0Z M1 26H994.700V705.600A7 7 0 0 1 987.700 712.600H8A7 7 0 0 1 1 705.600Z"/></svg>
</div>
</body>
</html>
